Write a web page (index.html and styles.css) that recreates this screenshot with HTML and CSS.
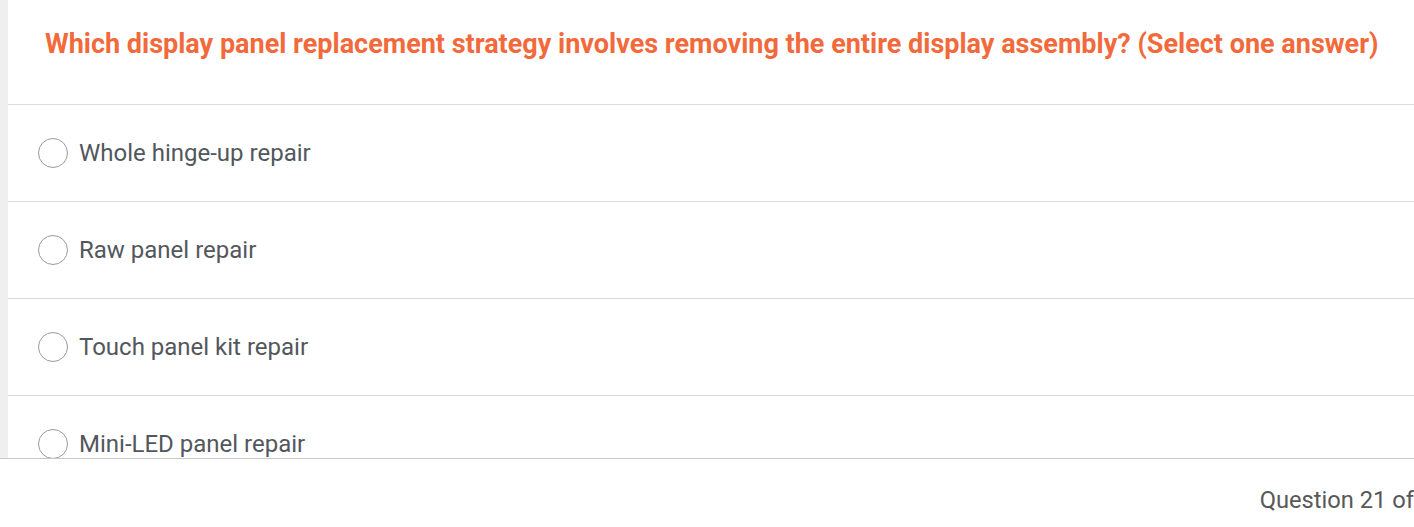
FILE: index.html
```html
<!DOCTYPE html>
<html>
<head>
<meta charset="utf-8">
<link rel="stylesheet" href="styles.css">
</head>
<body>
<div class="viewport">
  <div class="rail"></div>
  <div class="panel">
    <div class="question">Which display panel replacement strategy involves removing the entire display assembly? (Select one answer)</div>
    <div class="option"><span class="radio"></span><span class="label">Whole hinge-up repair</span></div>
    <div class="option"><span class="radio"></span><span class="label">Raw panel repair</span></div>
    <div class="option"><span class="radio"></span><span class="label">Touch panel kit repair</span></div>
    <div class="option"><span class="radio"></span><span class="label">Mini-LED panel repair</span></div>
  </div>
</div>
<div class="footer"><span class="counter">Question 21 of</span></div>
</body>
</html>
```
FILE: styles.css
```css
html, body {
  margin: 0;
  padding: 0;
  background: #ffffff;
  font-family: Roboto, "Liberation Sans", sans-serif;
}
.viewport {
  display: flex;
  height: 458px;
  overflow: hidden;
}
.rail {
  width: 8px;
  flex: none;
  background: #efefef;
}
.panel {
  flex: 1;
  display: flex;
  flex-direction: column;
}
.question {
  flex: none;
  height: 105px;
  box-sizing: border-box;
  border-bottom: 1px solid #dcdcdc;
  display: flex;
  align-items: center;
  padding-left: 37px;
  padding-bottom: 17px;
  color: #f26a3b;
  font-weight: 700;
  font-size: 27px;
  white-space: nowrap;
}
.option {
  flex: none;
  height: 97px;
  box-sizing: border-box;
  border-bottom: 1px solid #dcdcdc;
  display: flex;
  align-items: center;
  padding-left: 30px;
  gap: 11px;
}
.radio {
  width: 28px;
  height: 28px;
  border: 1px solid #9a9a9a;
  border-radius: 50%;
  flex: none;
}
.label {
  font-size: 24px;
  color: #52575d;
}
.footer {
  border-top: 1px solid #c8c8c8;
  height: 69px;
  box-sizing: border-box;
  display: flex;
  justify-content: flex-end;
  align-items: center;
}
.counter {
  font-size: 23.7px;
  color: #585858;
  white-space: nowrap;
  padding-top: 14px;
}
```
